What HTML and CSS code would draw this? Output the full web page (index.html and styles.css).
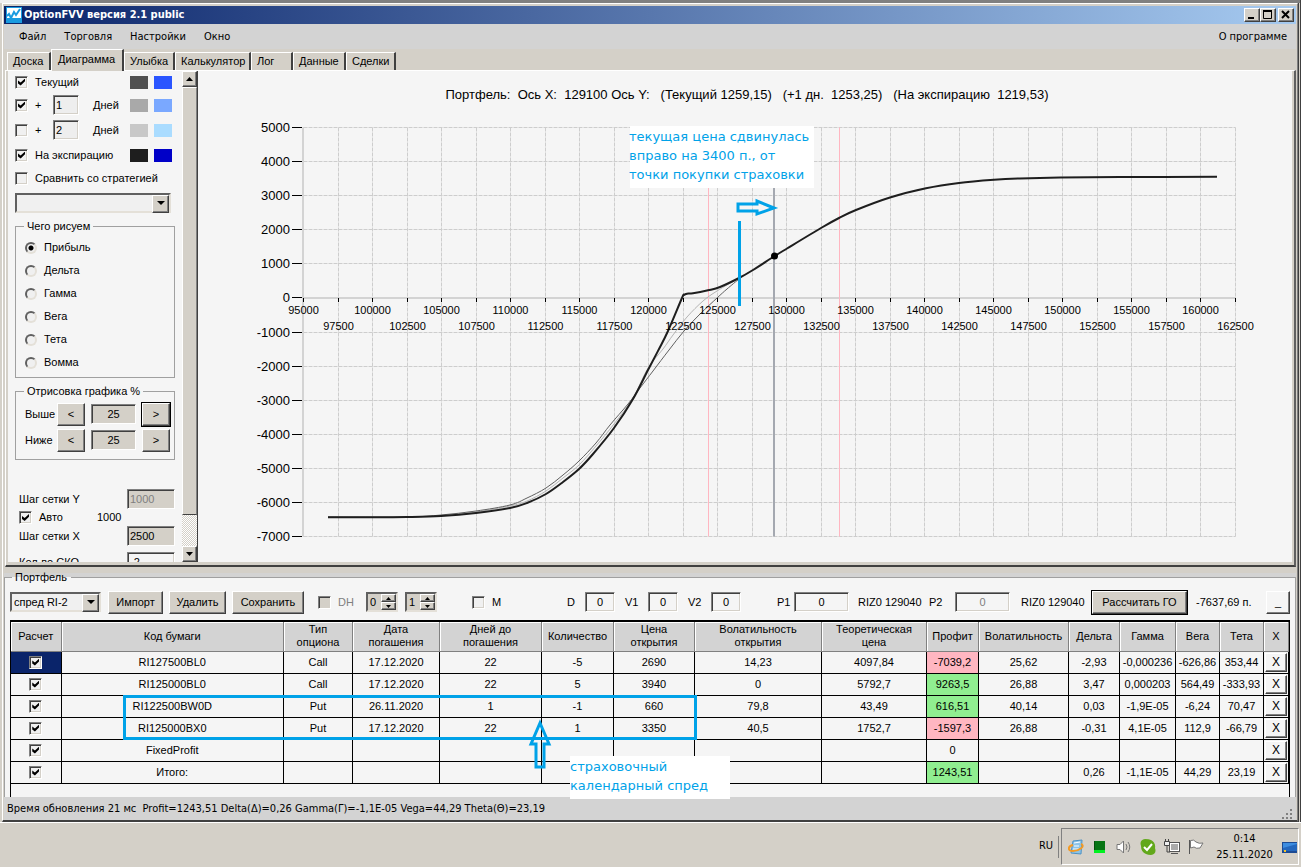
FILE: index.html
```html
<!DOCTYPE html>
<html lang="ru">

<head>
	<meta charset="UTF-8">
	<meta name="viewport" content="width=device-width, initial-scale=1.0">
	<title>OptionFVV версия 2.1 public</title>
	<link rel="stylesheet" href="styles.css">
</head>

<body>
	<div class="desktop">
		<main class="window">
			<header class="titlebar">
				<svg class="logo" width="16" height="16" viewBox="0 0 16 16">
					<rect width="16" height="16" fill="#1a9be0"/>
					<path d="M1 1H15V11H1Z" fill="#fff"/>
					<path d="M1 9L3 7L5 11L8 5L10 8L14 2" fill="none" stroke="#1a9be0" stroke-width="2"/>
				</svg>
				<h1>OptionFVV версия 2.1 public</h1>
				<button class="btn caption" type="button" aria-label="Свернуть"><svg width="12" height="10"><path d="M3 9H9" stroke="#000" stroke-width="2"/></svg></button>
				<button class="btn caption" type="button" aria-label="Развернуть"><svg width="12" height="10"><path d="M2.500 1V9.500H10.500V1" fill="none" stroke="#000"/><path d="M2 2H11" stroke="#000" stroke-width="2"/></svg></button>
				<button class="btn caption close" type="button" aria-label="Закрыть"><svg width="12" height="10"><path d="M3 2L10 9M10 2L3 9" stroke="#000" stroke-width="2"/></svg></button>
			</header>

			<nav class="menu">
				<a href="#file">Файл</a>
				<a href="#trade">Торговля</a>
				<a href="#settings">Настройки</a>
				<a href="#window">Окно</a>
				<a class="about" href="#about">О программе</a>
			</nav>

			<div class="tabs">
				<button type="button">Доска</button>
				<button type="button" class="active">Диаграмма</button>
				<button type="button">Улыбка</button>
				<button type="button">Калькулятор</button>
				<button type="button">Лог</button>
				<button type="button">Данные</button>
				<button type="button">Сделки</button>
			</div>

			<section class="page">
				<form class="sidebar">
					<div class="lines">
						<input type="checkbox" id="current" checked>
						<label class="wide" for="current">Текущий</label>
						<i class="swatch c1"></i><i class="swatch c2"></i>

						<input type="checkbox" id="plus1" checked>
						<label for="plus1">+</label>
						<input class="field" type="text" value="1" aria-label="Дней 1">
						<span>Дней</span>
						<i class="swatch c3"></i><i class="swatch c4"></i>

						<input type="checkbox" id="plus2">
						<label for="plus2">+</label>
						<input class="field" type="text" value="2" aria-label="Дней 2">
						<span>Дней</span>
						<i class="swatch c5"></i><i class="swatch c6"></i>

						<input type="checkbox" id="expiry" checked>
						<label class="wide" for="expiry">На экспирацию</label>
						<i class="swatch c7"></i><i class="swatch c8"></i>

						<input type="checkbox" id="compare">
						<label class="full" for="compare">Сравнить со стратегией</label>
					</div>

					<span class="combo strategy"><select aria-label="Стратегия"><option></option></select></span>

					<fieldset class="what">
						<legend>Чего рисуем</legend>
						<label><input type="radio" name="what" checked>Прибыль</label>
						<label><input type="radio" name="what">Дельта</label>
						<label><input type="radio" name="what">Гамма</label>
						<label><input type="radio" name="what">Вега</label>
						<label><input type="radio" name="what">Тета</label>
						<label><input type="radio" name="what">Вомма</label>
					</fieldset>

					<fieldset class="range">
						<legend>Отрисовка графика %</legend>
						<label for="above">Выше</label>
						<button class="btn" type="button">&lt;</button>
						<input class="field" type="text" id="above" value="25">
						<button class="btn default" type="button">&gt;</button>
						<label for="below">Ниже</label>
						<button class="btn" type="button">&lt;</button>
						<input class="field" type="text" id="below" value="25">
						<button class="btn" type="button">&gt;</button>
					</fieldset>

					<div class="steps">
						<label for="stepY">Шаг сетки Y</label>
						<input class="field" type="text" id="stepY" value="1000" disabled>
						<label class="auto"><input type="checkbox" checked>Авто</label>
						<span class="auto-value">1000</span>
						<label for="stepX">Шаг сетки X</label>
						<input class="field" type="text" id="stepX" value="2500">
						<label for="sko">Кол-во СКО</label>
						<input class="field light" type="text" id="sko" value="-2">
					</div>
				</form>

				<div class="scrollbar">
					<button class="btn" type="button" aria-label="Вверх"><svg width="7" height="4"><path d="M0 4L3.500 0L7 4Z"/></svg></button>
					<div class="thumb"></div>
					<div class="track"></div>
					<button class="btn" type="button" aria-label="Вниз"><svg width="7" height="4"><path d="M0 0L3.500 4L7 0Z"/></svg></button>
				</div>

				<div class="chart">
					<svg id="chart" viewBox="198 71 1094 490" preserveAspectRatio="xMidYMin">
						<g id="grid"></g>
						<g id="series"></g>
						<g id="axes"></g>
						<text class="chart-title" x="747" y="99" text-anchor="middle">Портфель:&nbsp; Ось X:&nbsp; 129100 Ось Y:&nbsp;&nbsp; (Текущий 1259,15)&nbsp;&nbsp; (+1 дн.&nbsp; 1253,25)&nbsp;&nbsp; (На экспирацию&nbsp; 1219,53)</text>
						<g class="note">
							<rect x="630" y="126" width="184" height="62"/>
							<text x="629" y="141">текущая цена сдвинулась</text>
							<text x="629" y="160">вправо на 3400 п., от</text>
							<text x="629" y="179">точки покупки страховки</text>
							<path d="M739.500 221V306"/>
							<path d="M738 204H757V201L774 208L757 214V211H738Z"/>
						</g>
					</svg>
				</div>
			</section>

			<fieldset class="portfolio">
				<legend>Портфель</legend>
				<div class="toolbar">
					<span class="combo"><select aria-label="Портфель"><option>спред RI-2</option></select></span>
					<button class="btn push b-import" type="button">Импорт</button>
					<button class="btn push b-delete" type="button">Удалить</button>
					<button class="btn push b-save" type="button">Сохранить</button>
					<input type="checkbox" id="dh" class="grey">
					<label for="dh" class="dim">DH</label>
					<span class="spin"><input type="text" value="0" aria-label="DH от"><button class="btn" type="button" aria-label="Больше"><svg width="5" height="3"><path d="M0 3L2.500 0L5 3Z"/></svg></button><button class="btn" type="button" aria-label="Меньше"><svg width="5" height="3"><path d="M0 0L2.500 3L5 0Z"/></svg></button></span>
					<span class="spin"><input type="text" value="1" aria-label="DH до"><button class="btn" type="button" aria-label="Больше"><svg width="5" height="3"><path d="M0 3L2.500 0L5 3Z"/></svg></button><button class="btn" type="button" aria-label="Меньше"><svg width="5" height="3"><path d="M0 0L2.500 3L5 0Z"/></svg></button></span>
					<input type="checkbox" id="m">
					<label for="m">M</label>
					<label for="d">D</label>
					<input class="field light small" type="text" id="d" value="0">
					<label for="v1">V1</label>
					<input class="field light small" type="text" id="v1" value="0">
					<label for="v2">V2</label>
					<input class="field light small" type="text" id="v2" value="0">
					<label for="p1">P1</label>
					<input class="field light price" type="text" id="p1" value="0">
					<span>RIZ0 129040</span>
					<label for="p2">P2</label>
					<input class="field light price" type="text" id="p2" value="0" disabled>
					<span>RIZ0 129040</span>
					<button class="btn push default b-calc" type="button">Рассчитать ГО</button>
					<span>-7637,69 п.</span>
					<button class="btn push plain" type="button">_</button>
				</div>

				<div class="grid">
					<table>
						<colgroup>
							<col class="w50"><col><col class="w69"><col class="w87"><col class="w102"><col class="w72"><col class="w81"><col class="w127"><col class="w105"><col class="w52"><col class="w90"><col class="w51"><col class="w56"><col class="w44"><col class="w44"><col class="w25">
						</colgroup>
						<thead>
							<tr><th>Расчет</th><th>Код бумаги</th><th>Тип<br>опциона</th><th>Дата<br>погашения</th><th>Дней до<br>погашения</th><th>Количество</th><th>Цена<br>открытия</th><th>Волатильность<br>открытия</th><th>Теоретическая<br>цена</th><th>Профит</th><th>Волатильность</th><th>Дельта</th><th>Гамма</th><th>Вега</th><th>Тета</th><th>X</th></tr>
						</thead>
						<tbody>
							<tr><td class="selected"><input type="checkbox" aria-label="RI127500BL0" checked></td><td>RI127500BL0</td><td>Call</td><td>17.12.2020</td><td>22</td><td>-5</td><td>2690</td><td>14,23</td><td>4097,84</td><td class="loss">-7039,2</td><td>25,62</td><td>-2,93</td><td>-0,000236</td><td>-626,86</td><td>353,44</td><td class="del"><button class="btn" type="button">X</button></td></tr>
							<tr><td><input type="checkbox" aria-label="RI125000BL0" checked></td><td>RI125000BL0</td><td>Call</td><td>17.12.2020</td><td>22</td><td>5</td><td>3940</td><td>0</td><td>5792,7</td><td class="gain">9263,5</td><td>26,88</td><td>3,47</td><td>0,000203</td><td>564,49</td><td>-333,93</td><td class="del"><button class="btn" type="button">X</button></td></tr>
							<tr><td><input type="checkbox" aria-label="RI122500BW0D" checked></td><td>RI122500BW0D</td><td>Put</td><td>26.11.2020</td><td>1</td><td>-1</td><td>660</td><td>79,8</td><td>43,49</td><td class="gain">616,51</td><td>40,14</td><td>0,03</td><td>-1,9E-05</td><td>-6,24</td><td>70,47</td><td class="del"><button class="btn" type="button">X</button></td></tr>
							<tr><td><input type="checkbox" aria-label="RI125000BX0" checked></td><td>RI125000BX0</td><td>Put</td><td>17.12.2020</td><td>22</td><td>1</td><td>3350</td><td>40,5</td><td>1752,7</td><td class="loss">-1597,3</td><td>26,88</td><td>-0,31</td><td>4,1E-05</td><td>112,9</td><td>-66,79</td><td class="del"><button class="btn" type="button">X</button></td></tr>
							<tr><td><input type="checkbox" aria-label="FixedProfit" checked></td><td>FixedProfit</td><td></td><td></td><td></td><td></td><td></td><td></td><td></td><td>0</td><td></td><td></td><td></td><td></td><td></td><td class="del"><button class="btn" type="button">X</button></td></tr>
							<tr><td><input type="checkbox" aria-label="Итого" checked></td><td>Итого:</td><td></td><td></td><td></td><td></td><td></td><td></td><td></td><td class="gain">1243,51</td><td></td><td>0,26</td><td>-1,1E-05</td><td>44,29</td><td>23,19</td><td class="del"><button class="btn" type="button">X</button></td></tr>
						</tbody>
					</table>
					<div class="mark-rows"></div>
					<svg class="mark-arrow" width="24" height="50" viewBox="0 0 24 50"><path d="M12 4L21 25H16V48H8V25H3Z"/></svg>
					<p class="mark-text">страховочный<br>календарный спред</p>
				</div>
			</fieldset>

			<footer class="status">
				<span>Время обновления 21 мс&nbsp; Profit=1243,51 Delta(Δ)=0,26 Gamma(Γ)=-1,1E-05 Vega=44,29 Theta(Θ)=23,19</span>
				<svg class="grip" width="12" height="12"><path d="M9 1h2v2h-2zM9 5h2v2h-2zM5 5h2v2h-2zM9 9h2v2h-2zM5 9h2v2h-2zM1 9h2v2h-2z"/></svg>
			</footer>
		</main>
	</div>

	<footer class="taskbar">
		<span class="lang">RU</span>
		<div class="tray">
			<svg width="16" height="16" viewBox="0 0 16 16">
				<path d="M5 2L14 1L13 15L3 14Z" fill="#8cc4e8" stroke="#4d92c4"/>
				<path d="M6 4L12 3M6 7H11M5 10H11" stroke="#fff"/>
				<path d="M13 5C18 7 11 12 5 12C-1 12 0 7 5 6" fill="none" stroke="#f39a24" stroke-width="2"/>
			</svg>
			<svg width="16" height="16" viewBox="0 0 16 16">
				<rect x="2" y="2" width="11" height="12" fill="#04510c"/>
				<path d="M4 2V11M6 2V11M8 2V11M10 2V11M12 2V11" stroke="#0a9a1c"/>
				<rect x="2" y="11" width="11" height="3" fill="#00f020"/>
			</svg>
			<svg width="16" height="16" viewBox="0 0 16 16" fill="none" stroke="#777">
				<path d="M1 5.500H4L7.500 2V14L4 10.500H1Z" fill="#fff"/>
				<path d="M10 5Q12 8 10 11M12 3Q15.500 8 12 13"/>
			</svg>
			<svg width="16" height="16" viewBox="0 0 16 16">
				<path d="M5 0Q9 0 11 1Q16 4 15 9Q17 15 11 16Q8 16 6 15Q1 13 1 7Q-1 1 5 0Z" fill="#62a81b"/>
				<path d="M4 8L7 11L12 5" fill="none" stroke="#fff" stroke-width="2"/>
			</svg>
			<svg width="16" height="16" viewBox="0 0 16 16">
				<rect x="5.500" y="3.500" width="10" height="9" fill="#aaa" stroke="#555"/>
				<rect x="6.500" y="4.500" width="8" height="7" fill="none" stroke="#fff"/>
				<path d="M7 14.500H14" stroke="#555"/>
				<path d="M0.500 2.500H5.500V6.500H0.500Z" fill="#eee" stroke="#444"/>
				<path d="M1.500 0V2M4.500 0V2M3 7V13H6" fill="none" stroke="#444"/>
			</svg>
			<svg width="16" height="16" viewBox="0 0 16 16">
				<path d="M1.500 1V15" stroke="#555"/>
				<path d="M2.500 1.500Q6 0 8 3Q11 5 15 4L12 9Q8 10 6 8L2.500 9Z" fill="#fff" stroke="#777"/>
			</svg>
			<time class="clock">0:14<br>25.11.2020</time>
			<svg width="16" height="16" viewBox="0 0 16 16">
				<rect x="1" y="3" width="15" height="11" fill="#1c4b94"/>
				<rect x="2" y="4" width="14" height="8" fill="#3d8de0"/>
				<path d="M2 9L16 5V12H2Z" fill="#2467bd"/>
				<path d="M3 11h2v2h-2z" fill="#f7c52c"/>
			</svg>
		</div>
	</footer>

	<script>
		const left = 303.5, right = 1235.5, top5 = 127.5, bottom = 536.5;

		// strike and profit to chart units
		function px(strike) {
			return left + (strike - 95000) / 67500 * (right - left);
		}
		function py(profit) {
			return top5 + (5000 - profit) / 12000 * (bottom - top5);
		}

		function line(x1, y1, x2, y2, cls) {
			return `<path class="${cls}" d="M${x1} ${y1}L${x2} ${y2}"/>`;
		}

		let grid = "", axes = "";
		for (let v = 5000; v >= -7000; v -= 1000) {
			const y = Math.floor(py(v)) + 0.5;
			grid += line(left, y, right, y, "dash");
			axes += line(292, y, 302, y, "tick");
			axes += `<text class="y-label" x="290" y="${y + 4}">${v}</text>`;
		}
		for (let v = 95000, i = 0; v <= 162500; v += 2500, i++) {
			const x = Math.floor(px(v)) + 0.5;
			grid += line(x, top5, x, bottom, "dash");
			axes += line(x, 298, x, 302, "tick");
			axes += `<text class="x-label" x="${x}" y="${i % 2 ? 330 : 314}">${v}</text>`;
		}
		grid += line(303, top5, 303, bottom, "axis");
		grid += line(left, 298, right, 298, "axis");
		grid += line(708.5, top5, 708.5, bottom, "sko");
		grid += line(839.5, top5, 839.5, bottom, "sko");
		grid += line(774, top5, 774, bottom, "price-line");
		document.getElementById("grid").innerHTML = grid;
		document.getElementById("axes").innerHTML = axes;

		const series = [
			{ cls: "plus-one", points: [[441, 516], [476, 512], [510, 506], [527, 501], [546, 491], [563, 478], [579, 465], [596, 446], [614, 424], [633, 398], [648, 368], [663, 349], [673, 335], [687, 317], [703, 301], [717, 291], [739, 278]] },
			{ cls: "now", points: [[328, 517], [407, 517], [441, 515], [476, 511], [510, 505], [527, 498], [546, 488], [563, 475], [579, 461], [596, 443], [610, 425], [628, 404], [640, 388], [653, 371], [669, 350], [684, 331], [700, 314], [717, 298], [727, 289], [739, 279]] },
			{ cls: "expiry", points: [[328, 517.3], [372, 517.3], [407, 517], [441, 516], [476, 513], [510, 508], [527, 503], [546, 494], [563, 482], [579, 469], [593, 454], [614, 428], [633, 399], [648, 370], [659, 349], [668, 331], [682, 298], [684, 295], [687, 293.7], [693, 293.3], [708, 290.3], [720, 287], [739, 278], [753, 270], [774, 256.5], [787, 248.5], [821, 228], [839, 218], [856, 210], [890, 197.5], [926, 188.3], [959, 183], [994, 179.8], [1020, 178.4], [1060, 177.4], [1120, 177], [1217, 176.8]] }
		];

		// Catmull-Rom through the points
		function curve(p) {
			let d = `M${p[0]}`;
			for (let i = 0; i < p.length - 1; i++) {
				const a = p[i - 1] || p[i], b = p[i], c = p[i + 1], e = p[i + 2] || c;
				d += `C${b[0] + (c[0] - a[0]) / 6} ${b[1] + (c[1] - a[1]) / 6} ${c[0] - (e[0] - b[0]) / 6} ${c[1] - (e[1] - b[1]) / 6} ${c[0]} ${c[1]}`;
			}
			return d;
		}

		document.getElementById("series").innerHTML =
			series.map(s => `<path class="${s.cls}" d="${curve(s.points)}"/>`).join("") +
			'<circle cx="774.5" cy="256" r="3.500"/>';
	</script>
</body>
</html>
```
FILE: styles.css
```css
* {
	box-sizing: border-box;
}

body {
	margin: 0;
	height: 100vh;
	display: flex;
	flex-direction: column;
	background: #d4d0c8;
	font-family: "Liberation Sans", Arial, sans-serif;
	font-size: 11px;
	line-height: 13px;
	color: #000;
}

button, input, select {
	font: inherit;
	color: inherit;
	margin: 0;
	padding: 0;
	border-radius: 0;
}

/* window frame */
.desktop {
	flex: 1;
	min-height: 0;
	display: flex;
	padding: 3px 2px 0 0;
	background: linear-gradient(to right, #f0f0f0 70px, #808080 70px) top / 100% 3px no-repeat, #d4d0c8;
	border-right: 1px solid #404040;
}

.window {
	flex: 1;
	min-width: 0;
	display: flex;
	flex-direction: column;
	margin-left: 2px;
	padding: 2px 1px 0 1px;
	border: 1px solid #fff;
	border-right-color: #808080;
	border-bottom: 2px solid #404040;
	box-shadow: 1px 0 #404040;
}

.titlebar {
	display: flex;
	align-items: center;
	height: 18px;
	padding: 0 2px;
	background: linear-gradient(to right, #0a246a, #a6caf0);
}

.titlebar h1 {
	flex: 1;
	margin: 0 0 0 2px;
	font: bold 11px/16px "DejaVu Sans Condensed", "DejaVu Sans", sans-serif;
	color: #fff;
}

.btn {
	background: #d4d0c8;
	border: 1px solid;
	border-color: #fff #404040 #404040 #fff;
	box-shadow: inset -1px -1px #808080;
}

.caption {
	width: 16px;
	height: 14px;
	display: flex;
}

.close {
	margin-left: 2px;
}

.menu {
	display: flex;
	gap: 18px;
	height: 25px;
	padding: 0 9px 0 15px;
	align-items: center;
	background: #d3d3d3;
	font-family: "DejaVu Sans Condensed", "DejaVu Sans", sans-serif;
}

.menu a {
	color: #000;
	text-decoration: none;
}

.menu .about {
	margin-left: auto;
}

.tabs {
	display: grid;
	grid-template-columns: 44px 73px 51px 76px 42px 53px 50px;
	align-items: end;
	height: 21px;
	padding-left: 3px;
}

.tabs button {
	height: 18px;
	padding: 0 0 0 5px;
	text-align: left;
	background: #d4d0c8;
	border: 1px solid #fff;
	border-right: 2px solid #404040;
	border-bottom: 0;
}

.tabs .active {
	height: 22px;
	margin-bottom: -1px;
	padding: 0 0 3px 6px;
	z-index: 1;
}

/* chart page */
.page {
	flex: 1;
	min-height: 0;
	display: flex;
	margin-left: 1px;
	padding: 0 2px 3px;
	border: 1px solid #fff;
	border-right: 2px solid #606060;
	border-bottom: 2px solid #404040;
}

.sidebar {
	width: 174px;
	flex: none;
	overflow: hidden;
	padding-left: 7px;
	background: #f5f5f5;
}

.lines {
	display: grid;
	grid-template-columns: 20px 18px 40px 37px 24px 18px;
	grid-template-rows: 22px 24px 26px 24px 22px;
	align-items: center;
}

.wide {
	grid-column: span 3;
}

.full {
	grid-column: span 5;
}

.lines .field {
	width: 26px;
}

.swatch {
	width: 18px;
	height: 13px;
}

.c1 { background: #505050; }
.c2 { background: #2a55ff; }
.c3 { background: #a9a9a9; }
.c4 { background: #7aa8ff; }
.c5 { background: #c8c8c8; }
.c6 { background: #aadcff; }
.c7 { background: #1e1e1e; }
.c8 { background: #0000c8; }

.field {
	height: 20px;
	padding: 0 2px;
	background: #eee;
	border: 1px solid;
	border-color: #808080 #fff #fff #808080;
	box-shadow: inset 1px 1px #404040, inset -1px -1px #d4d0c8;
}

.light {
	background: #f5f5f5;
}

.field:disabled {
	color: #808080;
}

input[type="checkbox"] {
	appearance: none;
	position: relative;
	width: 13px;
	height: 13px;
	background: #f0f0f0;
	border: 1px solid;
	border-color: #808080 #fff #fff #808080;
	box-shadow: inset 1px 1px #404040, inset -1px -1px #d4d0c8;
}

input[type="checkbox"].grey {
	background: #d4d0c8;
}

input[type="checkbox"]:checked::before {
	content: "";
	position: absolute;
	inset: 2px;
	background: #000;
	clip-path: polygon(0 28%, 38% 57%, 100% 0, 100% 40%, 38% 100%, 0 70%);
}

input[type="radio"] {
	appearance: none;
	width: 12px;
	height: 12px;
	border: 2px solid;
	border-color: #606060 #e4e0d8 #e4e0d8 #606060;
	border-radius: 50%;
	background: #f0f0f0;
}

input[type="radio"]:checked {
	background: radial-gradient(circle, #000 2px, #f0f0f0 3px);
}

.combo {
	position: relative;
	display: block;
	width: 91px;
	height: 20px;
}

.combo select {
	appearance: none;
	width: 100%;
	height: 100%;
	padding: 0 2px;
	background: #f0f0f0;
	border: 2px solid;
	border-color: #606060 #e4e0d8 #e4e0d8 #606060;
}

.combo::before {
	content: "";
	position: absolute;
	right: 2px;
	top: 2px;
	width: 15px;
	height: 16px;
	background: #d4d0c8;
	border: 1px solid;
	border-color: #fff #404040 #404040 #fff;
	box-shadow: inset -1px -1px #808080;
}

.combo::after {
	content: "";
	position: absolute;
	right: 6px;
	top: 8px;
	border: 4px solid transparent;
	border-top-color: #000;
	border-bottom: 0;
}

.strategy {
	width: 156px;
	margin-top: 4px;
}

fieldset {
	margin: 0;
	border: 1px solid #a0a0a0;
}

legend {
	padding: 0 3px;
}

.what {
	width: 160px;
	height: 158px;
	margin-top: 7px;
	padding: 3px 9px;
}

.what label {
	display: flex;
	align-items: center;
	gap: 7px;
	height: 23px;
}

.what legend, .range legend {
	margin-left: -1px;
}

.range {
	display: grid;
	grid-template-columns: 32px 34px 51px 28px;
	grid-auto-rows: 26px;
	align-items: center;
	width: 160px;
	height: 75px;
	margin-top: 7px;
	padding: 3px 0 0 9px;
}

.range .btn {
	width: 28px;
	height: 23px;
}

.range .field {
	width: 45px;
	text-align: center;
	background: #d4d0c8;
}

.default {
	outline: 1px solid #000;
}

.steps {
	display: grid;
	grid-template-columns: 78px 30px 48px;
	grid-template-rows: 20px 17px 20px 6px 20px;
	align-items: center;
	margin: 29px 0 0 4px;
}

.steps .field {
	grid-column: 3;
	background: #d4d0c8;
}

.steps .light {
	background: #f5f5f5;
}

.steps label[for="sko"], #sko {
	grid-row: 5;
}

.auto {
	display: flex;
	align-items: center;
	gap: 7px;
}

.auto-value {
	grid-column: 2 / span 2;
}

.scrollbar {
	width: 16px;
	flex: none;
	display: flex;
	flex-direction: column;
	border-right: 1px solid #404040;
}

.scrollbar .btn {
	height: 16px;
	display: flex;
	align-items: center;
	justify-content: center;
}

.thumb {
	flex: 428;
	background: #d4d0c8;
	border: 1px solid;
	border-color: #fff #808080 #404040 #fff;
}

.track {
	flex: 31;
	background: repeating-conic-gradient(#fff 0 25%, #d4d0c8 0 50%) 0 0 / 2px 2px;
}

.chart {
	flex: 1;
	min-width: 0;
	background: #f5f5f5;
}

.chart svg {
	display: block;
	width: 100%;
	height: 100%;
}

.chart path {
	fill: none;
}

.dash {
	stroke: #cdcdcd;
	stroke-dasharray: 4 1;
}

.axis {
	stroke: #d3d3d3;
	stroke-width: 2;
}

.tick {
	stroke: #000;
}

.sko {
	stroke: #ffb6c1;
}

.price-line {
	stroke: #a4a8b0;
	stroke-width: 2;
}

.plus-one {
	stroke: #b4b4b4;
}

.now {
	stroke: #606060;
}

.expiry {
	stroke: #1e1e1e;
	stroke-width: 2;
}

.y-label {
	font-size: 13px;
	text-anchor: end;
}

.x-label {
	font-size: 11px;
	text-anchor: middle;
}

.chart-title {
	font-size: 13px;
}

.note rect {
	fill: #fff;
}

.note text, .mark-text {
	font: 13px/19px "DejaVu Sans", Verdana, sans-serif;
	fill: #00a2e8;
	color: #00a2e8;
}

.note path {
	stroke: #00a2e8;
	stroke-width: 3;
}

/* portfolio */
.portfolio {
	min-width: 0;
	margin: 4px 0 0;
	padding: 6px 5px 0;
	background: #f5f5f5;
	border-bottom: 0;
	box-shadow: 0 -4px #d3d3d3;
}

.portfolio legend {
	padding: 0 4px 0 3px;
	margin-left: 2px;
}

.toolbar {
	display: grid;
	grid-template-columns: 98px 61px 63px 86px 20px 28px 39px 67px 20px 75px 18px 40px 23px 40px 23px 66px 17px 64px 71px 26px 66px 71px 104px 1fr 24px;
	align-items: center;
	height: 24px;
	white-space: nowrap;
}

.push {
	height: 23px;
	padding: 0;
}

.b-import { width: 55px; }
.b-delete { width: 57px; }
.b-save { width: 72px; }
.b-calc { width: 95px; }

.plain {
	background: #f5f5f5;
}

.dim {
	color: #808080;
}

.small {
	width: 30px;
	text-align: center;
}

.price {
	width: 55px;
	text-align: center;
}

.spin {
	display: grid;
	grid-template-columns: 1fr 15px;
	grid-template-rows: 8px 8px;
	width: 32px;
	height: 20px;
	background: #d4d0c8;
	border: 2px solid;
	border-color: #606060 #e4e0d8 #e4e0d8 #606060;
}

.spin input {
	grid-row: span 2;
	width: 100%;
	padding-left: 2px;
	background: none;
	border: 0;
}

.spin .btn {
	display: flex;
	align-items: center;
	justify-content: center;
	padding: 0;
}

.grid {
	position: relative;
	height: 177px;
	margin-top: 6px;
	border: 1px solid #000;
	border-top-width: 2px;
	border-bottom: 0;
}

table {
	width: 100%;
	table-layout: fixed;
	border-collapse: collapse;
}

.w25 { width: 25px; }
.w44 { width: 44px; }
.w50 { width: 50px; }
.w51 { width: 51px; }
.w52 { width: 52px; }
.w56 { width: 56px; }
.w69 { width: 69px; }
.w72 { width: 72px; }
.w81 { width: 81px; }
.w87 { width: 87px; }
.w90 { width: 90px; }
.w102 { width: 102px; }
.w105 { width: 105px; }
.w127 { width: 127px; }

th {
	height: 29px;
	padding: 0;
	background: #d3d3d3;
	font-weight: normal;
	border-right: 1px solid #808080;
	border-bottom: 1px solid #808080;
	box-shadow: inset 1px 1px #fff;
}

td {
	height: 22px;
	padding: 0;
	text-align: center;
	white-space: nowrap;
	border: 1px solid #000;
	border-top-width: 0;
}

th:first-child, td:first-child {
	border-left: 0;
}

td input[type="checkbox"] {
	display: block;
	margin: 0 auto;
}

.selected {
	background: #0a246a;
}

.loss {
	background: #ffb6c1;
}

.gain {
	background: #90ee90;
}

.del .btn {
	display: block;
	width: 22px;
	height: 19px;
	margin: 0 auto;
	background: #f5f5f5;
	font-size: 12px;
}

/* pen marks over the table */
.mark-rows {
	position: absolute;
	left: 112px;
	top: 73px;
	width: 574px;
	height: 45px;
	border: 3px solid #00a2e8;
}

.mark-arrow {
	position: absolute;
	left: 517px;
	top: 97px;
	fill: none;
	stroke: #00a2e8;
	stroke-width: 3;
}

.mark-text {
	position: absolute;
	left: 559px;
	top: 134px;
	width: 160px;
	height: 43px;
	margin: 0;
	padding-top: 1px;
	background: #fff;
}

.status {
	display: flex;
	justify-content: space-between;
	align-items: center;
	height: 23px;
	padding: 0 3px;
	background: #d3d3d3;
	font-family: "DejaVu Sans Condensed", "DejaVu Sans", sans-serif;
}

.grip {
	fill: #808080;
	align-self: flex-end;
}

/* taskbar */
.taskbar {
	display: flex;
	justify-content: flex-end;
	align-items: center;
	height: 45px;
	padding: 3px 2px 0 0;
	border-top: 1px solid #fff;
	font-family: "DejaVu Sans Condensed", "DejaVu Sans", sans-serif;
}

.lang {
	height: 22px;
	padding: 3px 5px 0 0;
	margin-right: 2px;
	border-right: 1px solid #808080;
}

.tray {
	display: flex;
	align-items: center;
	gap: 8px;
	height: 37px;
	padding: 0 1px 0 6px;
	border: 1px solid;
	border-color: #808080 #fff #fff #808080;
}

.tray svg {
	flex: none;
}

.clock {
	width: 61px;
	padding-left: 4px;
	text-align: center;
	line-height: 16px;
}
```
